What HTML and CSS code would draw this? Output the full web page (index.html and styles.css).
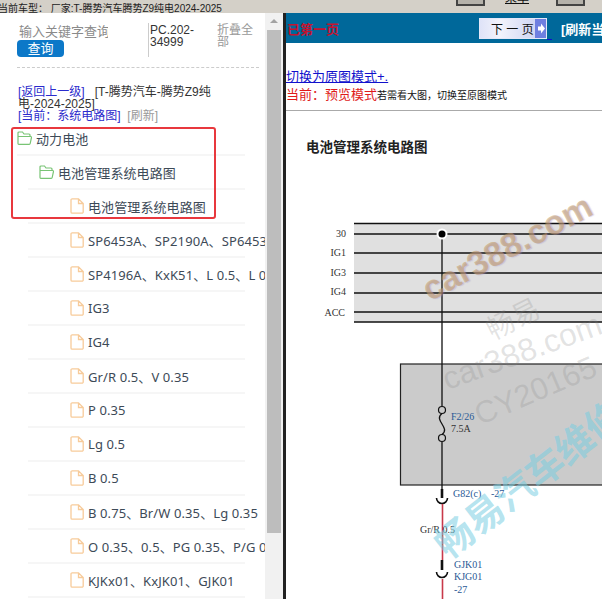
FILE: index.html
```html
<!DOCTYPE html>
<html>
<head>
    <title>电池管理系统电路图</title>
    <meta charset="UTF-8">
    <link rel="stylesheet" href="styles.css">
</head>
<body>
    <svg class="icon-defs" width="0" height="0">
        <symbol id="folder" viewBox="0 0 15 14">
            <path d="M1 12.500V2a1 1 0 0 1 1-1h3.500l1.500 2h5a1 1 0 0 1 1 1v1.500M1 12.500a.8.8 0 0 0 .8.8h10.400a1 1 0 0 0 1-.8l1.300-6a.8.8 0 0 0-.8-1H1" fill="none" stroke="#78c474" stroke-width="1.200"/>
        </symbol>
        <symbol id="file" viewBox="0 0 14 16">
            <path d="M2.200 .8h6.300l4.700 4.700v8.500a1.200 1.200 0 0 1-1.200 1.200H2.200A1.200 1.200 0 0 1 1 14V2a1.200 1.200 0 0 1 1.200-1.200zM8.500 .8v4.700h4.700" fill="none" stroke="#f7cb9a" stroke-width="1.300"/>
        </symbol>
    </svg>
    <div class="top-bar">
        <span class="car-name">当前车型： 厂家:T-腾势汽车腾势Z9纯电2024-2025</span>
        <span class="top-btn top-btn-left"></span>
        <span class="top-link">菜单</span>
        <span class="top-btn top-btn-right"></span>
    </div>
    <div class="main">
        <div class="side">
            <div class="side-scroll">
                <div class="search-row">
                    <div class="search-box">
                        <div class="search-input">输入关键字查询</div>
                        <span class="search-btn">查询</span>
                    </div>
                    <div class="search-code">PC.202-34999</div>
                    <div class="search-fold">折叠全部</div>
                </div>
                <div class="crumbs">
                    <a class="crumb-link">[返回上一级]</a>&nbsp;&nbsp; [T-腾势汽车-腾势Z9纯电-2024-2025]<br>
                    <a class="crumb-link">[当前：系统电路图]</a>&nbsp;&nbsp;<span class="crumb-gray">[刷新]</span>
                </div>
                <ul class="tree">
                    <li class="tree-item lv0"><svg class="ico-folder"><use href="#folder"/></svg>动力电池</li>
                    <li class="tree-item lv1"><svg class="ico-folder"><use href="#folder"/></svg>电池管理系统电路图</li>
                    <li class="tree-item lv2"><svg class="ico-file"><use href="#file"/></svg>电池管理系统电路图</li>
                    <li class="tree-item lv2"><svg class="ico-file"><use href="#file"/></svg>SP6453A、SP2190A、SP6453B</li>
                    <li class="tree-item lv2"><svg class="ico-file"><use href="#file"/></svg>SP4196A、KxK51、L 0.5、L 0.35</li>
                    <li class="tree-item lv2"><svg class="ico-file"><use href="#file"/></svg>IG3</li>
                    <li class="tree-item lv2"><svg class="ico-file"><use href="#file"/></svg>IG4</li>
                    <li class="tree-item lv2"><svg class="ico-file"><use href="#file"/></svg>Gr/R 0.5、V 0.35</li>
                    <li class="tree-item lv2"><svg class="ico-file"><use href="#file"/></svg>P 0.35</li>
                    <li class="tree-item lv2"><svg class="ico-file"><use href="#file"/></svg>Lg 0.5</li>
                    <li class="tree-item lv2"><svg class="ico-file"><use href="#file"/></svg>B 0.5</li>
                    <li class="tree-item lv2"><svg class="ico-file"><use href="#file"/></svg>B 0.75、Br/W 0.35、Lg 0.35</li>
                    <li class="tree-item lv2"><svg class="ico-file"><use href="#file"/></svg>O 0.35、0.5、PG 0.35、P/G 0.5</li>
                    <li class="tree-item lv2"><svg class="ico-file"><use href="#file"/></svg>KJKx01、KxJK01、GJK01</li>
                </ul>
                <div class="mark-box"></div>
            </div>
            <div class="scrollbar">
                <div class="scroll-arrow"></div>
                <div class="scroll-thumb"></div>
            </div>
        </div>
        <div class="content">
            <div class="page-bar">
                <span class="page-first">已第一页</span>
                <span class="page-next">下 一 页<svg class="next-arrow" viewBox="0 0 11 19"><path d="M3 7.500h3V4.500l4 5-4 5v-3H3z" fill="#fff"/></svg></span>
                <a class="next-tail"></a>
                <span class="page-refresh">[刷新当前页]</span>
            </div>
            <div class="mode">
                <a class="mode-link">切换为原图模式+.</a><br>
                <span class="mode-red">当前：预览模式</span><span class="mode-tip">若需看大图，切换至原图模式</span>
            </div>
            <div class="diagram">
                <div class="diagram-title">电池管理系统电路图</div>
                <!-- viewBox uses page coordinates -->
                <svg class="diagram-svg" viewBox="286 111 316 488" width="316" height="488">
                    <rect x="354" y="223" width="248" height="99" fill="#e0e0e0"/>
                    <rect x="400.500" y="364" width="210" height="121" fill="#cbcbcb" stroke="#222" stroke-width="1.200"/>
                    <path d="M354 223.500H602M354 234H602M354 253H602M354 273H602M354 293H602M354 312H602M354 322H602" fill="none" stroke="#111" stroke-width="1.300"/>
                    <path d="M442 234V406M442 442V489" stroke="#111" stroke-width="1.300" fill="none"/>
                    <circle cx="442" cy="234" r="5.500" fill="#fff"/>
                    <circle cx="442" cy="234" r="3.500" fill="#000"/>
                    <circle cx="442" cy="410" r="3.500" fill="#cbcbcb" stroke="#111" stroke-width="1.200"/>
                    <circle cx="442" cy="438" r="3.500" fill="#cbcbcb" stroke="#111" stroke-width="1.200"/>
                    <path d="M442 413.500C433 420 451 428 442 434.500" stroke="#111" stroke-width="1.300" fill="none"/>
                    <path d="M442 489V498M442 560V570" stroke="#111" stroke-width="2.600" fill="none"/>
                    <path d="M436.500 498a5.500 5.500 0 0 0 11 0M436.500 572a5.500 5.500 0 0 0 11 0" stroke="#111" stroke-width="1.600" fill="none"/>
                    <path d="M442.500 504V560M442.500 579V599" stroke="#c8394a" stroke-width="1.600" fill="none"/>
                    <g class="dia-label" text-anchor="end">
                        <text x="346" y="237">30</text>
                        <text x="346" y="256">IG1</text>
                        <text x="346" y="276">IG3</text>
                        <text x="346" y="295">IG4</text>
                        <text x="345" y="316">ACC</text>
                    </g>
                    <text class="dia-blue" x="451" y="420">F2/26</text>
                    <text class="dia-label" x="451" y="432">7.5A</text>
                    <text class="dia-blue" x="453" y="497">G82(c)</text>
                    <text class="dia-blue" x="491" y="497">-27</text>
                    <text class="dia-label" x="420" y="533">Gr/R 0.5</text>
                    <text class="dia-blue" x="454" y="568">GJK01</text>
                    <text class="dia-blue" x="454" y="580">KJG01</text>
                    <text class="dia-blue" x="454" y="593">-27</text>
                </svg>
                <div class="wm wm-car">car388.com</div>
                <div class="wm wm-gray wm-cy">畅易</div>
                <div class="wm wm-gray wm-car2">car388.com</div>
                <div class="wm wm-gray wm-id">CY20165</div>
                <div class="wm wm-cn">畅易汽车维修</div>
            </div>
        </div>
    </div>
</body>
</html>
```
FILE: styles.css
```css
* {
    box-sizing: border-box;
}
html, body {
    margin: 0;
    height: 100%;
    overflow: hidden;
}
body {
    font-family: "Liberation Sans", "Noto Sans CJK SC", sans-serif;
    background: #d4d0c8;
    width: 602px;
    height: 599px;
}
.icon-defs {
    display: block;
    height: 0;
}

/* top bar */
.top-bar {
    height: 13px;
    position: relative;
    background: #d4d0c8;
    font-size: 10px;
    line-height: 17px;
    color: #222;
    white-space: nowrap;
    overflow: hidden;
}
.car-name {
    margin-left: -2px;
}
.top-btn {
    position: absolute;
    top: -8px;
    width: 29px;
    height: 14px;
    background: #b5b2ab;
    border: 2px solid #444;
    border-top: 0;
}
.top-btn-left {
    left: 456px;
}
.top-btn-right {
    left: 556px;
}
.top-link {
    position: absolute;
    left: 505px;
    top: -10px;
    font-size: 12px;
    text-decoration: underline;
    color: #111;
}

.main {
    display: flex;
    height: 586px;
}

/* left panel */
.side {
    width: 283px;
    display: flex;
    background: #fff;
}
.side-scroll {
    width: 265px;
    position: relative;
    overflow: hidden;
}
.scrollbar {
    width: 18px;
    background: #f1f1f1;
}
.scroll-arrow {
    width: 0;
    height: 0;
    margin: 6px auto 0;
    border-left: 4px solid transparent;
    border-right: 4px solid transparent;
    border-bottom: 4px solid #a3a3a3;
}
.scroll-thumb {
    width: 14px;
    height: 503px;
    margin: 7px auto 0;
    background: #bdbdbd;
}
.search-row {
    display: flex;
    margin: 10px 6px 0 17px;
    border-bottom: 1px dashed #ccc;
    height: 45px;
}
.search-box {
    width: 132px;
    height: 34px;
    border-right: 1px solid #ccc;
}
.search-input {
    font-size: 13px;
    line-height: 17px;
    color: #8a8a8a;
    margin-left: 2px;
    width: 89px;
    white-space: nowrap;
    overflow: hidden;
}
.search-btn {
    display: block;
    width: 47px;
    height: 17px;
    background: #0c78c8;
    border-radius: 4px;
    color: #fff;
    font-size: 13px;
    line-height: 17px;
    text-align: center;
}
.search-code {
    width: 68px;
    padding: 1px 0 0 1px;
    font-size: 12px;
    line-height: 12px;
    color: #333;
}
.search-fold {
    width: 38px;
    padding-top: 1px;
    font-size: 12px;
    line-height: 12px;
    color: #999;
}
.crumbs {
    margin: 18px 0 0 18px;
    width: 205px;
    font-size: 12px;
    line-height: 12px;
    color: #333;
}
.crumb-link {
    color: #2b2bcc;
}
.crumb-gray {
    color: #999;
}
.tree {
    list-style: none;
    margin: 0;
    padding: 0;
}
.tree-item {
    height: 34px;
    display: flex;
    align-items: center;
    font-family: "Noto Sans", "Noto Sans CJK SC", sans-serif;
    font-size: 13px;
    letter-spacing: 0.1px;
    color: #3d4a57;
    white-space: nowrap;
    border-bottom: 2px solid #f6f6f6;
    margin-right: 20px;
}
.ico-folder {
    width: 15px;
    height: 14px;
    flex: none;
    margin-right: 4px;
}
.ico-file {
    width: 14px;
    height: 16px;
    flex: none;
    margin-right: 4px;
}
.lv0 {
    margin-left: 17px;
}
.lv1 {
    margin-left: 28px;
    padding-left: 11px;
}
.lv2 {
    margin-left: 28px;
    padding-left: 42px;
}
.mark-box {
    position: absolute;
    left: 11px;
    top: 114px;
    width: 205px;
    height: 92px;
    border: 2px solid #e8383d;
    border-radius: 3px;
}

/* right panel */
.content {
    flex: 1;
    min-width: 0;
    border-left: 3px solid #222;
    background: #fff;
    overflow: hidden;
}
.page-bar {
    height: 30px;
    background: #00689a;
    display: flex;
    align-items: center;
    white-space: nowrap;
}
.page-first {
    flex: none;
    color: #c4122f;
    font-size: 13px;
    font-weight: bold;
    margin-left: 1px;
    width: 192px;
}
.page-next {
    flex: none;
    display: flex;
    align-items: center;
    width: 68px;
    height: 21px;
    padding-left: 11px;
    background: linear-gradient(90deg, #dfe3f8, #f2f3fc 30%, #c6cdf0);
    border: 1px solid #e4e7f8;
    font-size: 12px;
    color: #111;
    position: relative;
}
.next-arrow {
    position: absolute;
    right: 0;
    top: 0;
    width: 11px;
    height: 19px;
    background: #6f7fe0;
}
.next-tail {
    flex: none;
    align-self: flex-end;
    width: 5px;
    height: 4px;
    margin-bottom: 3px;
    border-bottom: 1px solid #1111cc;
}
.page-refresh {
    flex: none;
    margin-left: 9px;
    color: #fff;
    font-size: 13px;
    font-weight: bold;
}
.mode {
    margin-top: 25px;
    height: 43px;
    font-size: 13px;
    line-height: 18px;
    border-bottom: 1px solid #aaa;
}
.mode-link {
    color: #1111cc;
    text-decoration: underline;
}
.mode-red {
    color: #e01a1a;
}
.mode-tip {
    font-size: 10px;
    color: #111;
}
.diagram {
    position: relative;
    height: 488px;
}
.diagram-title {
    position: absolute;
    left: 20px;
    top: 25px;
    font-size: 13.5px;
    font-weight: bold;
    color: #222;
}
.diagram-svg {
    position: absolute;
    left: 0;
    top: 0;
}
.dia-label {
    font-family: "Liberation Serif", serif;
    font-size: 10px;
    fill: #333;
}
.dia-blue {
    font-family: "Liberation Serif", serif;
    font-size: 10px;
    fill: #2a5a96;
}

/* watermarks */
.wm {
    position: absolute;
    white-space: nowrap;
    line-height: 1;
    transform-origin: left bottom;
}
.wm-car {
    left: 146px;
    top: 161px;
    font-size: 34px;
    font-weight: bold;
    transform: rotate(-28deg);
    color: rgba(196, 150, 90, 0.5);
    text-shadow: 1px 1px 1px rgba(150, 140, 200, 0.35);
}
.wm-gray {
    color: rgba(130, 130, 130, 0.22);
}
.wm-cy {
    left: 209px;
    top: 206px;
    font-size: 28px;
    transform: rotate(-27deg);
}
.wm-car2 {
    left: 163px;
    top: 252px;
    font-size: 32px;
    transform: rotate(-20deg);
}
.wm-id {
    left: 196px;
    top: 288px;
    font-size: 31px;
    transform: rotate(-23deg);
}
.wm-cn {
    left: 166px;
    top: 416px;
    font-size: 38px;
    font-weight: bold;
    transform: rotate(-38deg);
    color: rgba(120, 205, 225, 0.55);
}
```
